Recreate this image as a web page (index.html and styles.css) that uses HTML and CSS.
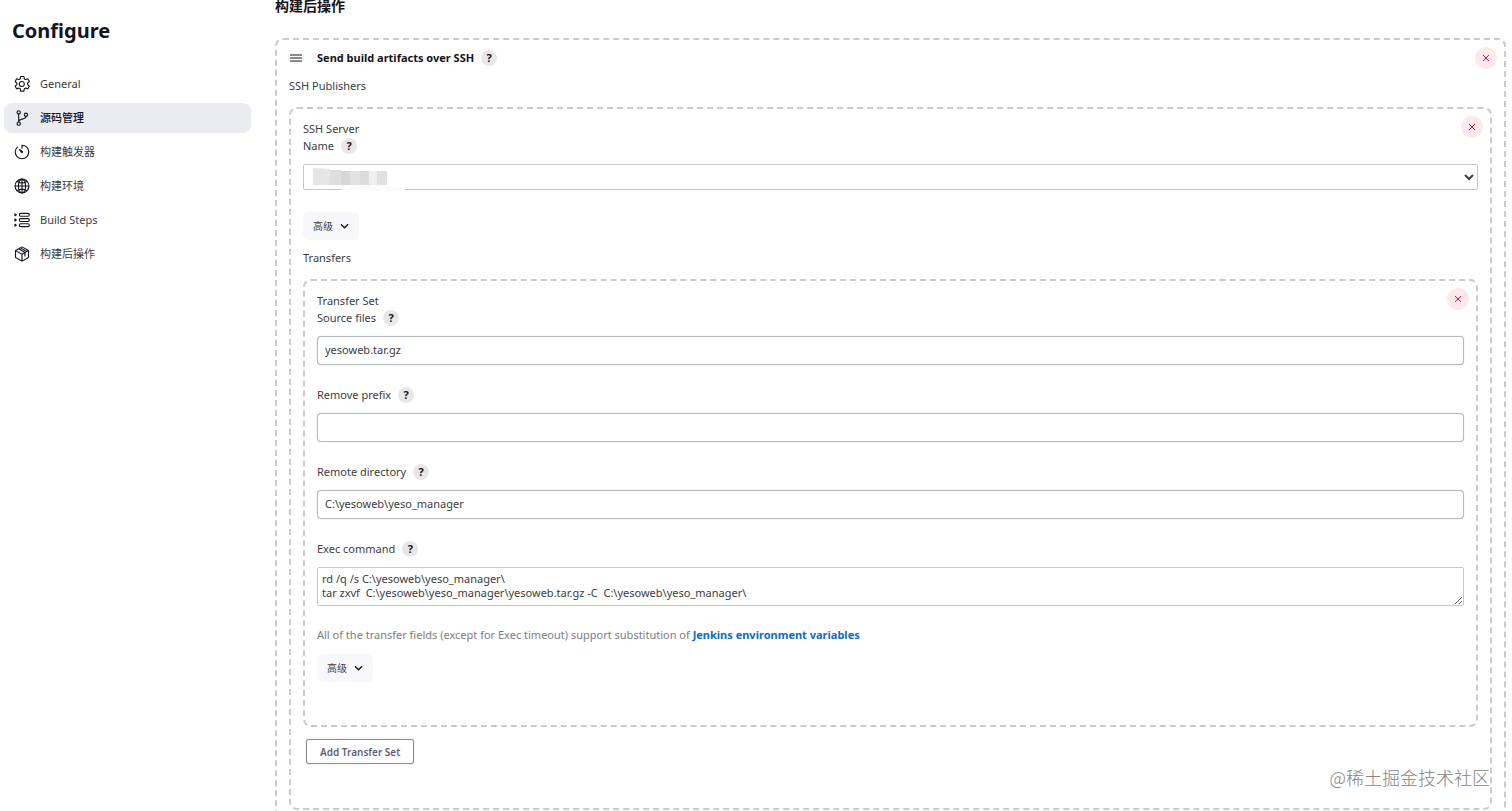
FILE: index.html
```
<!DOCTYPE html>
<html lang="zh-CN">
<head>
    <meta charset="UTF-8">
    <title>Configure</title>
    <link rel="stylesheet" href="styles.css">
</head>
<body>
    <div class="page">
        <aside class="sidebar">
            <h1>Configure</h1>
            <nav class="tasks">
                <a class="task" href="#general">
                    <svg viewBox="0 0 512 512"><path d="M262 176a80 80 0 1 0 67 67 80 80 0 0 0-67-67zm179 80a175 175 0 0 1-1 22l47 37a11 11 0 0 1 2 14l-44 77a11 11 0 0 1-13 4l-55-22a16 16 0 0 0-15 1 183 183 0 0 1-26 15 16 16 0 0 0-8 12l-9 59a11 11 0 0 1-11 9h-88a11 11 0 0 1-11-9l-8-59a16 16 0 0 0-9-12 169 169 0 0 1-25-15 16 16 0 0 0-16-1l-55 22a11 11 0 0 1-13-4l-44-77a11 11 0 0 1 2-14l47-37a16 16 0 0 0 6-14 183 183 0 0 1 0-30 16 16 0 0 0-6-13l-47-37a11 11 0 0 1-2-14l44-77a11 11 0 0 1 13-4l55 22a16 16 0 0 0 16-1 183 183 0 0 1 25-15 16 16 0 0 0 9-12l8-59a11 11 0 0 1 11-9h88a11 11 0 0 1 11 9l8 59a16 16 0 0 0 9 12 169 169 0 0 1 25 15 16 16 0 0 0 16 1l55-22a11 11 0 0 1 13 4l44 77a11 11 0 0 1-2 14l-47 37a16 16 0 0 0-6 14c1 5 1 11 1 15z"/></svg>
                    General
                </a>
                <a class="task active" href="#scm">
                    <svg viewBox="0 0 512 512"><circle cx="150" cy="76" r="52"/><circle cx="150" cy="436" r="52"/><circle cx="382" cy="150" r="52"/><path d="M150 384V128M382 202c0 138-232 40-232 182"/></svg>
                    源码管理
                </a>
                <a class="task" href="#triggers">
                    <svg viewBox="0 0 512 512"><path d="M113 98A216 216 0 0 0 40 256c0 120 96 216 216 216s216-96 216-216S376 40 256 40v94"/><path class="solid" d="M229 283a36 36 0 0 1-4-5l-65-92a19 19 0 0 1 26-26l92 65a36 36 0 1 1-49 58z"/></svg>
                    构建触发器
                </a>
                <a class="task" href="#environment">
                    <svg viewBox="0 0 512 512"><circle cx="256" cy="256" r="222"/><path d="M256 34c-60 0-117 98-117 222s57 222 117 222 117-98 117-222S316 34 256 34zM106 112c42 30 94 46 150 46s108-16 150-46M406 400c-42-30-94-46-150-46s-108 16-150 46M256 34v444M478 256H34"/></svg>
                    构建环境
                </a>
                <a class="task" href="#build-steps">
                    <svg viewBox="0 0 512 512"><rect x="170" y="44" width="320" height="92" rx="46"/><rect x="170" y="210" width="320" height="92" rx="46"/><rect x="170" y="376" width="320" height="92" rx="46"/><path d="M30 60l44 30-44 30zM30 226l44 30-44 30zM30 392l44 30-44 30z"/></svg>
                    Build Steps
                </a>
                <a class="task" href="#post-build">
                    <svg viewBox="0 0 512 512"><path d="M464 350V162a32 32 0 0 0-16-28L272 36a32 32 0 0 0-32 0L64 134a32 32 0 0 0-16 28v188a32 32 0 0 0 16 28l176 98a32 32 0 0 0 32 0l176-98a32 32 0 0 0 16-28zM54 148l202 116 202-116M256 476V264M150 88l200 118v112M206 60l200 116"/></svg>
                    构建后操作
                </a>
            </nav>
        </aside>

        <main class="main">
            <h2>构建后操作</h2>

            <section class="chunk">
                <button class="delete" type="button" aria-label="Delete"><svg viewBox="0 0 8 8"><path d="M1 1l6 6M7 1l-6 6"/></svg></button>
                <div class="chunk-header">
                    <svg class="handle" viewBox="0 0 12 8"><path d="M0 1h12M0 4h12M0 7h12"/></svg>
                    <b>Send build artifacts over SSH</b>
                    <button class="help" type="button">?</button>
                </div>
                <div class="section-label">SSH Publishers</div>

                <section class="chunk">
                    <button class="delete" type="button" aria-label="Delete"><svg viewBox="0 0 8 8"><path d="M1 1l6 6M7 1l-6 6"/></svg></button>
                    <div class="chunk-title">SSH Server</div>
                    <div class="field">
                        <div class="field-label">
                            <label for="serverName">Name</label>
                            <button class="help" type="button">?</button>
                        </div>
                        <div class="select-wrap">
                            <select id="serverName"><option></option></select>
                            <svg class="mosaic" viewBox="0 0 94 28">
                                <path fill="#fff" d="M0 2h92v26H34l-8-4H0z"/>
                                <path fill="#e6e6e6" d="M0 4l17 1v16H0z"/>
                                <path fill="#dfdfdf" d="M17 6h11v15H17z"/>
                                <path fill="#d7d7d7" d="M28 7h9v14h-9z"/>
                                <path fill="#e2e2e2" d="M37 7h10v14H37z"/>
                                <path fill="#dcdcdc" d="M47 7h9v14h-9z"/>
                                <path fill="#efefef" d="M56 7h8v14h-8z"/>
                                <path fill="#e0e0e0" d="M64 7h10v14H64z"/>
                                <path fill="#fafafa" d="M38 21h30v6H38zM74 23h14v4H74z"/>
                            </svg>
                        </div>
                    </div>
                    <button class="advanced" type="button">高级 <svg viewBox="0 0 10 6"><path d="M1 1l4 4 4-4"/></svg></button>
                    <div class="section-label transfers">Transfers</div>

                    <section class="chunk">
                        <button class="delete" type="button" aria-label="Delete"><svg viewBox="0 0 8 8"><path d="M1 1l6 6M7 1l-6 6"/></svg></button>
                        <div class="chunk-title">Transfer Set</div>
                        <div class="field">
                            <div class="field-label">
                                <label for="sourceFiles">Source files</label>
                                <button class="help" type="button">?</button>
                            </div>
                            <input type="text" id="sourceFiles" value="yesoweb.tar.gz">
                        </div>
                        <div class="field">
                            <div class="field-label">
                                <label for="removePrefix">Remove prefix</label>
                                <button class="help" type="button">?</button>
                            </div>
                            <input type="text" id="removePrefix">
                        </div>
                        <div class="field">
                            <div class="field-label">
                                <label for="remoteDirectory">Remote directory</label>
                                <button class="help" type="button">?</button>
                            </div>
                            <input type="text" id="remoteDirectory" value="C:\yesoweb\yeso_manager">
                        </div>
                        <div class="field">
                            <div class="field-label">
                                <label for="execCommand">Exec command</label>
                                <button class="help" type="button">?</button>
                            </div>
                            <textarea id="execCommand" rows="2" spellcheck="false">rd /q /s C:\yesoweb\yeso_manager\
tar zxvf  C:\yesoweb\yeso_manager\yesoweb.tar.gz -C  C:\yesoweb\yeso_manager\</textarea>
                        </div>
                        <p class="note">All of the transfer fields (except for Exec timeout) support substitution of <a href="#env-vars">Jenkins environment variables</a></p>
                        <button class="advanced last" type="button">高级 <svg viewBox="0 0 10 6"><path d="M1 1l4 4 4-4"/></svg></button>
                    </section>

                    <button class="add" type="button">Add Transfer Set</button>
                </section>
            </section>
        </main>

        <div class="watermark">@稀土掘金技术社区</div>
    </div>
</body>
</html>
```
FILE: styles.css
```
* {
    margin: 0;
    padding: 0;
    box-sizing: border-box;
}

body {
    font-family: "Noto Sans", "Noto Sans CJK SC", sans-serif;
    font-size: 11px;
    line-height: 16px;
    color: #3c3c42;
    background: #fff;
}

button, input, select, textarea {
    font: inherit;
    color: inherit;
}

button {
    border: none;
    cursor: pointer;
}

svg {
    fill: none;
    stroke: currentColor;
}

.page {
    position: relative;
    display: flex;
    gap: 24px;
    height: 100vh;
    padding-right: 6px;
    overflow: hidden;
}

.sidebar {
    flex: 0 0 251px;
    padding: 16px 0 0 4px;
}

.sidebar h1 {
    padding-left: 8px;
    margin-bottom: 23px;
    font-size: 20px;
    line-height: 30px;
    color: #14141f;
}

.tasks {
    display: flex;
    flex-direction: column;
    gap: 4px;
}

.task {
    display: flex;
    align-items: center;
    gap: 10px;
    height: 30px;
    padding-left: 10px;
    border-radius: 8px;
    color: #3c3c42;
    text-decoration: none;
}

.task svg {
    width: 16px;
    height: 16px;
    color: #14141f;
    stroke-width: 36;
    stroke-linecap: round;
    stroke-linejoin: round;
}

.task .solid {
    fill: currentColor;
    stroke: none;
}

.task.active {
    background: #ebecf2;
    color: #14141f;
    font-weight: 500;
}

.main {
    flex: 1;
    min-width: 0;
}

.main h2 {
    margin-bottom: 26px;
    font-size: 14px;
    line-height: 12px;
    color: #14141f;
}

.chunk {
    position: relative;
    padding: 12px;
    border: 2px dashed #c8cccd;
    border-radius: 8px;
}

.chunk-header {
    display: flex;
    align-items: center;
    height: 16px;
    margin: -2px 0 12px;
    color: #14141f;
}

.handle {
    width: 12px;
    height: 8px;
    margin: 0 15px 0 1px;
}

.section-label {
    margin-bottom: 13px;
}

.chunk-title {
    margin-bottom: 1px;
}

.field {
    margin-bottom: 22px;
}

.field-label {
    display: flex;
    align-items: center;
    height: 16px;
    margin-bottom: 10px;
}

.help {
    width: 16px;
    height: 16px;
    margin-left: 7px;
    border-radius: 50%;
    background: #e8e8e8;
    color: #14141f;
    font-weight: 700;
}

.delete {
    position: absolute;
    top: 7px;
    right: 7px;
    display: flex;
    align-items: center;
    justify-content: center;
    width: 22px;
    height: 22px;
    border-radius: 50%;
    background: #fde8ec;
    color: #d6134a;
}

.delete svg {
    width: 8px;
    height: 8px;
}

.select-wrap {
    position: relative;
}

select {
    display: block;
    width: 100%;
    height: 26px;
    border: 1px solid #c3c9cb;
    border-radius: 2px;
    background: #fff;
}

/* blurred server name */
.mosaic {
    position: absolute;
    top: 0;
    left: 10px;
    width: 94px;
    height: 28px;
    stroke: none;
    pointer-events: none;
}

input, textarea {
    display: block;
    width: 100%;
    background: #fff;
}

input {
    height: 29px;
    padding: 0 7px 2px;
    border: 1px solid #b4babd;
    border-radius: 4px;
    box-shadow: 0 0 1px #b4babd;
}

textarea {
    height: 39px;
    padding: 4px;
    border: 1px solid #c3c9cb;
    border-radius: 2px;
    line-height: 14px;
    overflow: hidden;
    resize: vertical;
}

.advanced {
    display: flex;
    align-items: center;
    gap: 7px;
    height: 28px;
    padding: 0 10px;
    border-radius: 6px;
    background: #f8f8fa;
    font-size: 10px;
}

.advanced svg {
    width: 9px;
    height: 6px;
    color: #14141f;
    stroke-width: 1.500;
}

.advanced.last {
    margin-bottom: 31px;
}

.transfers {
    margin-top: 10px;
}

.note {
    margin-bottom: 12px;
    line-height: 14px;
    color: #7c7c85;
}

.note a {
    color: #0b6ccb;
    font-weight: 700;
    text-decoration: none;
}

.add {
    height: 25px;
    margin: 12px 0 32px 3px;
    padding: 0 13px;
    border: 1px solid #8d8d98;
    border-radius: 3px;
    background: #fff;
    box-shadow: 0 0 1px #8d8d98;
    color: #5f5f7a;
    font-size: 10px;
    font-weight: 600;
}

.watermark {
    position: absolute;
    right: 22px;
    bottom: 21px;
    font-family: "Noto Sans CJK SC", sans-serif;
    font-size: 18px;
    font-weight: 300;
    line-height: 26px;
    color: #858585;
}
```
